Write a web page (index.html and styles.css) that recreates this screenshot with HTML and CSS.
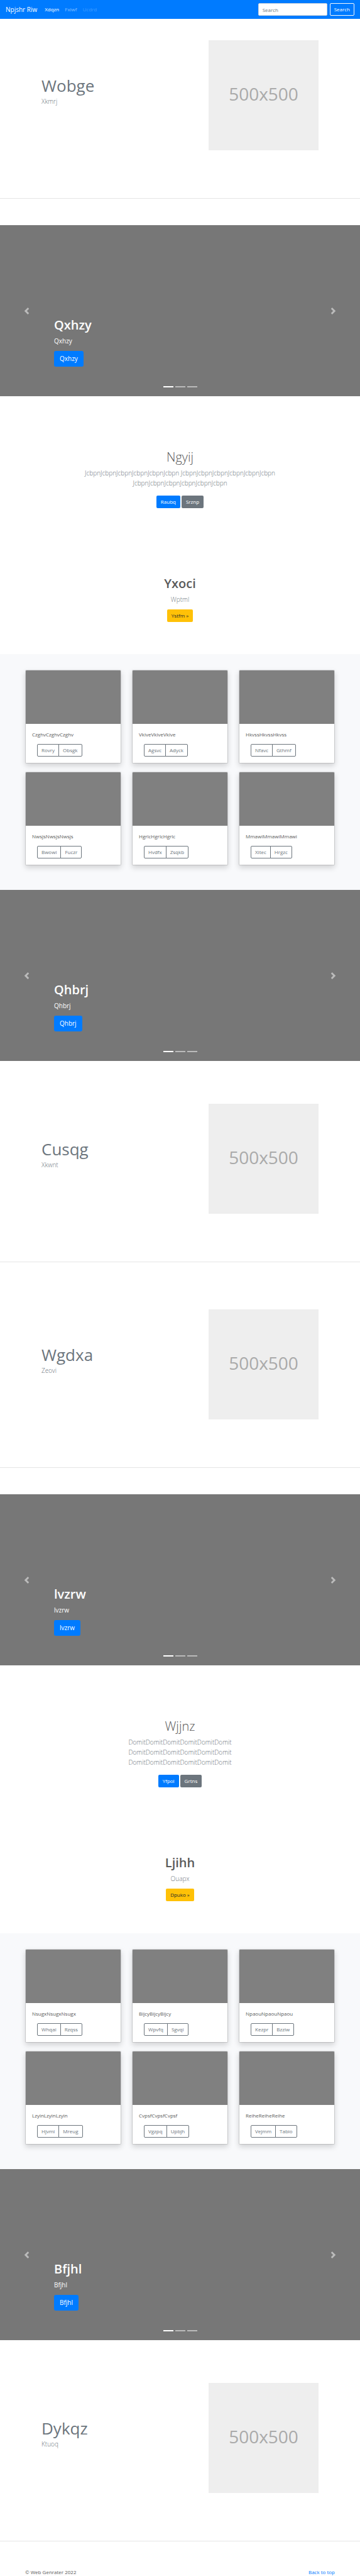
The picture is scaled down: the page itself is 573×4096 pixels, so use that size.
FILE: index.html
```html
<!DOCTYPE html>
<html lang="en">
<head>
<meta charset="utf-8">
<meta name="viewport" content="width=device-width, initial-scale=1">
<title>Npjshr Riw</title>
<link rel="stylesheet" href="styles.css">
</head>
<body>
<header class="navbar" id="top">
  <a class="brand" href="#">Npjshr Riw</a>
  <nav class="nav-links">
    <a class="active" href="#">Xdqzn</a>
    <a href="#">Fxiwf</a>
    <a class="disabled" href="#">Ucdrd</a>
  </nav>
  <form class="search">
    <input type="search" placeholder="Search" aria-label="Search">
    <button class="btn btn-outline-light" type="button">Search</button>
  </form>
</header>
<main>
  <section class="feature feature-first">
    <div class="feature-text"><h2>Wobge</h2><p class="lead">Xkmrj</p></div>
    <div class="placeholder">500x500</div>
  </section>
  <hr class="before-carousel">

  <section class="carousel">
    <div class="caption"><h1>Qxhzy</h1><p>Qxhzy</p><a class="btn btn-primary btn-lg" href="#">Qxhzy</a></div>
    <button class="arrow prev" type="button" aria-label="Previous"><svg viewBox="0 0 8 8"><path d="M5.25 0l-4 4 4 4 1.5-1.5L4.25 4l2.5-2.5L5.25 0z"/></svg></button>
    <button class="arrow next" type="button" aria-label="Next"><svg viewBox="0 0 8 8"><path d="M2.75 0l-1.5 1.5L3.75 4l-2.5 2.5L2.75 8l4-4-4-4z"/></svg></button>
    <div class="indicators"><span class="on"></span><span></span><span></span></div>
  </section>

  <section class="intro">
    <h1 class="light">Ngyij</h1>
    <p class="lead">JcbpnJcbpnJcbpnJcbpnJcbpnJcbpn JcbpnJcbpnJcbpnJcbpnJcbpnJcbpn JcbpnJcbpnJcbpnJcbpnJcbpnJcbpn</p>
    <div class="actions"><a class="btn btn-primary" href="#">Raubq</a><a class="btn btn-secondary" href="#">Srznp</a></div>
  </section>
  <section class="callout">
    <h1>Yxoci</h1>
    <p class="lead">Wptml</p>
    <a class="btn btn-warning" href="#">Ystfm »</a>
  </section>

  <section class="album">
    <article class="card"><div class="thumb"></div><div class="card-body"><p>CzghvCzghvCzghv</p><div class="group"><button type="button">Rovry</button><button type="button">Obsgk</button></div></div></article>
    <article class="card"><div class="thumb"></div><div class="card-body"><p>VkiveVkiveVkive</p><div class="group"><button type="button">Agsvc</button><button type="button">Adyck</button></div></div></article>
    <article class="card"><div class="thumb"></div><div class="card-body"><p>HkvssHkvssHkvss</p><div class="group"><button type="button">Nfavc</button><button type="button">Gthmf</button></div></div></article>
    <article class="card"><div class="thumb"></div><div class="card-body"><p>NwsjsNwsjsNwsjs</p><div class="group"><button type="button">Bwowi</button><button type="button">Fuczr</button></div></div></article>
    <article class="card"><div class="thumb"></div><div class="card-body"><p>HgrlcHgrlcHgrlc</p><div class="group"><button type="button">Hvdfx</button><button type="button">Zsqkb</button></div></div></article>
    <article class="card"><div class="thumb"></div><div class="card-body"><p>MmawiMmawiMmawi</p><div class="group"><button type="button">Xitec</button><button type="button">Hrgzc</button></div></div></article>
  </section>

  <section class="carousel">
    <div class="caption"><h1>Qhbrj</h1><p>Qhbrj</p><a class="btn btn-primary btn-lg" href="#">Qhbrj</a></div>
    <button class="arrow prev" type="button" aria-label="Previous"><svg viewBox="0 0 8 8"><path d="M5.25 0l-4 4 4 4 1.5-1.5L4.25 4l2.5-2.5L5.25 0z"/></svg></button>
    <button class="arrow next" type="button" aria-label="Next"><svg viewBox="0 0 8 8"><path d="M2.75 0l-1.5 1.5L3.75 4l-2.5 2.5L2.75 8l4-4-4-4z"/></svg></button>
    <div class="indicators"><span class="on"></span><span></span><span></span></div>
  </section>

  <section class="feature">
    <div class="feature-text"><h2>Cusqg</h2><p class="lead">Xkwnt</p></div>
    <div class="placeholder">500x500</div>
  </section>
  <hr>
  <section class="feature feature-next">
    <div class="feature-text"><h2>Wgdxa</h2><p class="lead">Zeovi</p></div>
    <div class="placeholder">500x500</div>
  </section>
  <hr class="before-carousel">

  <section class="carousel">
    <div class="caption"><h1>lvzrw</h1><p>lvzrw</p><a class="btn btn-primary btn-lg" href="#">lvzrw</a></div>
    <button class="arrow prev" type="button" aria-label="Previous"><svg viewBox="0 0 8 8"><path d="M5.25 0l-4 4 4 4 1.5-1.5L4.25 4l2.5-2.5L5.25 0z"/></svg></button>
    <button class="arrow next" type="button" aria-label="Next"><svg viewBox="0 0 8 8"><path d="M2.75 0l-1.5 1.5L3.75 4l-2.5 2.5L2.75 8l4-4-4-4z"/></svg></button>
    <div class="indicators"><span class="on"></span><span></span><span></span></div>
  </section>

  <section class="intro">
    <h1 class="light">Wjjnz</h1>
    <p class="lead">DomitDomitDomitDomitDomitDomit DomitDomitDomitDomitDomitDomit DomitDomitDomitDomitDomitDomit</p>
    <div class="actions"><a class="btn btn-primary" href="#">Yfpol</a><a class="btn btn-secondary" href="#">Grtns</a></div>
  </section>
  <section class="callout">
    <h1>Ljihh</h1>
    <p class="lead">Ouapx</p>
    <a class="btn btn-warning" href="#">Dpuko »</a>
  </section>

  <section class="album">
    <article class="card"><div class="thumb"></div><div class="card-body"><p>NsugxNsugxNsugx</p><div class="group"><button type="button">Whqai</button><button type="button">Rzqss</button></div></div></article>
    <article class="card"><div class="thumb"></div><div class="card-body"><p>BijcyBijcyBijcy</p><div class="group"><button type="button">Wpvfq</button><button type="button">Sgvqi</button></div></div></article>
    <article class="card"><div class="thumb"></div><div class="card-body"><p>NpaouNpaouNpaou</p><div class="group"><button type="button">Kezpr</button><button type="button">Bzziw</button></div></div></article>
    <article class="card"><div class="thumb"></div><div class="card-body"><p>LzyinLzyinLzyin</p><div class="group"><button type="button">Hjvmi</button><button type="button">Mreug</button></div></div></article>
    <article class="card"><div class="thumb"></div><div class="card-body"><p>CvpsfCvpsfCvpsf</p><div class="group"><button type="button">Vgzpq</button><button type="button">Upbjh</button></div></div></article>
    <article class="card"><div class="thumb"></div><div class="card-body"><p>ReiheReiheReihe</p><div class="group"><button type="button">Vejmm</button><button type="button">Tabio</button></div></div></article>
  </section>

  <section class="carousel">
    <div class="caption"><h1>Bfjhl</h1><p>Bfjhl</p><a class="btn btn-primary btn-lg" href="#">Bfjhl</a></div>
    <button class="arrow prev" type="button" aria-label="Previous"><svg viewBox="0 0 8 8"><path d="M5.25 0l-4 4 4 4 1.5-1.5L4.25 4l2.5-2.5L5.25 0z"/></svg></button>
    <button class="arrow next" type="button" aria-label="Next"><svg viewBox="0 0 8 8"><path d="M2.75 0l-1.5 1.5L3.75 4l-2.5 2.5L2.75 8l4-4-4-4z"/></svg></button>
    <div class="indicators"><span class="on"></span><span></span><span></span></div>
  </section>

  <section class="feature">
    <div class="feature-text"><h2>Dykqz</h2><p class="lead">Ktuoq</p></div>
    <div class="placeholder">500x500</div>
  </section>
  <hr>
</main>
<footer class="footer">
  <p>© Web Genrater 2022</p>
  <a href="#top">Back to top</a>
</footer>
</body>
</html>
```
FILE: styles.css
```css
* { box-sizing: border-box; }

body {
  margin: 0;
  background: #fff;
  color: #5a5a5a;
  font-family: "Open Sans", "Noto Sans", sans-serif;
  font-size: 8px;
  line-height: 12px;
}

h1, h2, p { margin: 0; }
a { color: #007bff; text-decoration: none; }
button, input { font: inherit; }

h1 {
  font-size: 20px;
  line-height: 24px;
  font-weight: 600;
  margin-bottom: 5px;
}
h1.light { font-weight: 300; }

.lead {
  font-size: 10px;
  line-height: 16px;
  font-weight: 300;
  color: #6c757d;
}

hr {
  height: 1px;
  margin: 0;
  border: 0;
  background: #e5e5e5;
}
.before-carousel { margin-bottom: 42px; }

/* Buttons */
.btn {
  display: inline-block;
  height: 20px;
  padding: 3px 6px;
  border: 1px solid transparent;
  border-radius: 2px;
  color: #fff;
  line-height: 12px;
  text-align: center;
}
.btn-primary { background: #007bff; }
.btn-secondary { background: #6c757d; }
.btn-warning { background: #ffc107; color: #212529; }
.btn-outline-light { background: transparent; border-color: #f8f9fa; }
.btn-lg {
  height: 25px;
  padding: 4px 8px;
  border-radius: 3px;
  font-size: 10px;
  line-height: 15px;
}

/* Navigation */
.navbar {
  display: flex;
  align-items: center;
  height: 30px;
  padding: 0 9px;
  background: #007bff;
}
.brand {
  margin-right: 12px;
  color: #fff;
  font-size: 10px;
}
.nav-links { display: flex; gap: 9px; }
.nav-links a { color: rgba(255, 255, 255, .5); }
.nav-links .active { color: #fff; }
.nav-links .disabled { color: rgba(255, 255, 255, .25); }
.search { display: flex; gap: 4px; margin-left: auto; }
.search input {
  width: 110px;
  height: 20px;
  padding: 3px 6px;
  border: 1px solid #ced4da;
  border-radius: 2px;
  background: #fff;
}
.search input::placeholder { color: #6c757d; opacity: 1; }

/* Feature rows */
.feature {
  display: flex;
  align-items: center;
  justify-content: space-between;
  padding: 68px 66px 76px;
}
.feature-first { padding-top: 34px; }
.feature-next { padding-top: 75px; }
.feature h2 {
  color: #6c757d;
  font-size: 26px;
  line-height: 34px;
  font-weight: 400;
}
.feature-text { padding-bottom: 15px; }
.placeholder {
  display: flex;
  align-items: center;
  justify-content: center;
  width: 175px;
  aspect-ratio: 1;
  padding-bottom: 6px;
  background: #eee;
  color: #aaa;
  font-size: 28px;
}

/* Carousel */
.carousel {
  position: relative;
  display: flex;
  align-items: flex-end;
  min-height: 272px;
  padding: 0 86px 47px;
  background: #777;
  color: #fff;
}
.caption p {
  margin-bottom: 8px;
  font-size: 10px;
  line-height: 16px;
}
.caption .btn { display: block; width: fit-content; }
.arrow {
  position: absolute;
  top: 0;
  bottom: 0;
  width: 15%;
  padding: 0;
  border: 0;
  background: none;
  opacity: .5;
}
.arrow svg {
  display: block;
  width: 11px;
  height: 11px;
  margin: 0 auto;
  fill: #fff;
}
.prev { left: 0; }
.next { right: 0; }
.indicators {
  position: absolute;
  left: 0;
  right: 0;
  bottom: 14px;
  display: flex;
  justify-content: center;
  gap: 3px;
}
.indicators span {
  width: 16px;
  height: 2px;
  background: #fff;
  opacity: .5;
}
.indicators .on { opacity: 1; }

/* Centred text blocks */
.intro, .callout {
  display: flex;
  flex-direction: column;
  align-items: center;
  text-align: center;
}
.intro { padding: 85px 124px 54px; }
.intro .lead { margin-bottom: 12px; }
.actions { display: flex; gap: 2px; }
.callout { padding: 54px 124px 51px; }
.callout .lead { margin-bottom: 8px; }

/* Cards */
.album {
  display: grid;
  grid-template-columns: repeat(3, 1fr);
  gap: 13px 17px;
  padding: 25px 40px 39px;
  background: #f8f9fb;
}
.card {
  overflow: hidden;
  border: 1px solid rgba(0, 0, 0, .125);
  border-radius: 2px;
  background: #fff;
  background-clip: padding-box;
  box-shadow: 0 4px 8px rgba(0, 0, 0, .15);
}
.thumb { height: 85px; background: #808080; }
.card-body { padding: 11px 10px 10px; }
.group { display: flex; margin: 9px 0 0 8px; }
.group button {
  height: 20px;
  padding: 3px 6px;
  border: 1px solid #6c757d;
  background: transparent;
  color: #6c757d;
  line-height: 12px;
}
.group button:first-child { border-radius: 2px 0 0 2px; }
.group button:last-child { margin-left: -1px; border-radius: 0 2px 2px 0; }

.footer {
  display: flex;
  justify-content: space-between;
  padding: 43px 40px 0;
}
```
